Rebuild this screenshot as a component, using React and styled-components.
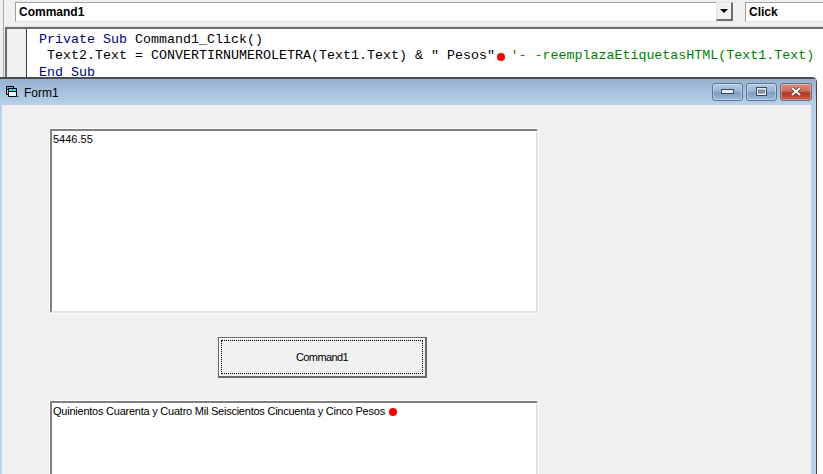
import React from "react";
import styled, { createGlobalStyle } from "styled-components";

const Global = createGlobalStyle`
  html, body { margin: 0; padding: 0; background: #fff; overflow: hidden; }
  #root { width: 823px; height: 474px; overflow: hidden; }
`;

const Page = styled.div`
  width: 823px;
  height: 474px;
  display: flex;
  flex-direction: column;
  overflow: hidden;
  background: #fff;
`;

const Ide = styled.div`
  height: 77px;
  flex: none;
  display: flex;
  background: #f0f0f0;
  padding-left: 3px;
`;

const IdeInner = styled.div`
  flex: 1;
  min-width: 0;
  display: flex;
  flex-direction: column;
  border-left: 1px solid #a9a9a9;
  padding-left: 1px;
`;

const ComboRow = styled.div`
  height: 27px;
  flex: none;
  display: flex;
  align-items: center;
  gap: 12px;
  padding-left: 10px;
  border-bottom: 1px solid #e3e3e3;
  box-sizing: border-box;
`;

const Combo = styled.div`
  height: 20px;
  width: ${(p) => p.$width}px;
  flex: none;
  box-sizing: border-box;
  margin-top: -3px;
  background: #fff;
  border: 1px solid #a0a0a0;
  border-bottom-color: #e3e3e3;
  border-right: none;
  display: flex;
  align-items: center;
  justify-content: space-between;
  padding-left: 3px;
  font: bold 12px/18px "Liberation Sans", Arial, sans-serif;
  color: #000;
`;

const ComboArrow = styled.div`
  width: 17px;
  height: 19px;
  background: #f0f0f0;
  border: 2px solid #6f6f6f;
  border-top: 1px solid #e3e3e3;
  border-left: 1px solid #e3e3e3;
  box-sizing: border-box;
  display: flex;
  align-items: center;
  justify-content: center;
`;

const Editor = styled.div`
  flex: 1;
  min-height: 0;
  display: flex;
  border-top: 2px solid #6d6d6d;
  border-left: 2px solid #6d6d6d;
  background: #fff;
`;

const Gutter = styled.div`
  width: 19px;
  flex: none;
  background: #f0f0f0;
  border-right: 1px solid #404040;
`;

const Code = styled.div`
  flex: 1;
  padding: 2.5px 0 0 12px;
  font: 13.33px/16.5px "Liberation Mono", "Courier New", monospace;
  color: #000;
  white-space: pre;
`;

const Keyword = styled.span`
  color: #00007f;
`;

const Comment = styled.span`
  color: #007f00;
`;

const RedDot = styled.span`
  display: inline-block;
  width: ${(p) => p.$size}px;
  height: ${(p) => p.$size}px;
  border-radius: 50%;
  background: #f60000;
  vertical-align: ${(p) => p.$drop}px;
  margin: 0 ${(p) => p.$after}px 0 ${(p) => p.$before}px;
`;

const Window = styled.div`
  flex: 1;
  min-height: 0;
  width: 817px;
  box-sizing: border-box;
  display: flex;
  flex-direction: column;
  border-top: 2px solid #4c4c4c;
  border-top-right-radius: 5px;
  border-right: 1px solid #3a4a5a;
  background: #b9d1ea;
`;

const TitleBar = styled.div`
  height: 26px;
  flex: none;
  display: flex;
  align-items: center;
  padding-left: 6px;
  gap: 5px;
  background: linear-gradient(#97b0cd, #b9d1ea);
  font: 12px/16px "Liberation Sans", Arial, sans-serif;
  color: #000;
`;

const TitleText = styled.span`
  flex: 1;
  padding-top: 1px;
`;

const Caption = styled.div`
  display: flex;
  gap: 3px;
  margin-right: 4px;
  margin-top: -1px;
`;

const CapButton = styled.div`
  width: ${(p) => p.$width}px;
  height: 18px;
  box-sizing: border-box;
  border: 1px solid #5d7390;
  border-radius: 3px;
  background: ${(p) =>
    p.$close
      ? "linear-gradient(#dc8b7e, #cf6a58 45%, #b43a28 55%, #c85a44)"
      : "linear-gradient(#b4cae2, #9ab4d2 45%, #7f9cbe 55%, #9ebcda)"};
  box-shadow: inset 0 0 0 1px rgba(255, 255, 255, 0.35);
  display: flex;
  align-items: center;
  justify-content: center;
`;

const Client = styled.div`
  flex: 1;
  margin-left: 2px;
  margin-right: 5px;
  background: #f0f0f0;
  display: flex;
  flex-direction: column;
  padding: 24px 0 0 48px;
  min-height: 0;
  overflow: hidden;
`;

const TextBox = styled.div`
  width: 488px;
  height: ${(p) => p.$height}px;
  flex: none;
  box-sizing: border-box;
  background: #fff;
  border: 2px solid;
  border-color: #808080 #e3e3e3 #e3e3e3 #808080;
  padding: 2px 0 0 1px;
  font: 11px/13px "Liberation Sans", Arial, sans-serif;
  letter-spacing: ${(p) => (p.$tight ? "-0.235px" : "0")};
  color: #000;
  white-space: pre;
  outline: 1px solid #fff;
`;

const CommandRow = styled.div`
  flex: none;
  height: 88px;
  padding-left: 168px;
  display: flex;
  align-items: center;
`;

const CommandButton = styled.div`
  width: 209px;
  height: 41px;
  box-sizing: border-box;
  background: #f0f0f0;
  border: 1px solid #696969;
  border-right-width: 2px;
  border-bottom-width: 2px;
  box-shadow: inset 1px 1px 0 #fff;
  padding: 2px;
  display: flex;
`;

const CommandFocus = styled.div`
  flex: 1;
  border: 1px dotted #000;
  display: flex;
  align-items: center;
  justify-content: center;
  padding-top: 1px;
  font: 11px/13px "Liberation Sans", Arial, sans-serif;
  letter-spacing: -0.6px;
  color: #000;
`;

const FormIcon = () => (
  <svg width="13" height="12" viewBox="0 0 13 12" fill="none">
    <path d="M.5 .5h7v3h-7z" fill="#35d6e6" stroke="#000" />
    <path d="M.5 3.500v5h2" stroke="#000" />
    <path d="M2.500 2.500h8v8h-8z" fill="#fff" stroke="#000" />
    <path d="M2.500 2.500h8v3h-8z" fill="#35d6e6" stroke="#000" />
    <rect x="11" y="10" width="2" height="1" fill="#6a6a6a" />
  </svg>
);

export default function App() {
  return (
    <Page>
      <Global />
      <Ide>
        <IdeInner>
          <ComboRow>
            <Combo $width={718}>
              Command1
              <ComboArrow>
                <svg width="8" height="4" viewBox="0 0 8 4">
                  <path d="M0 0h8L4 4z" fill="#000" />
                </svg>
              </ComboArrow>
            </Combo>
            <Combo $width={90}>Click</Combo>
          </ComboRow>
          <Editor>
            <Gutter />
            <Code>
              <Keyword>Private Sub</Keyword> Command1_Click(){"\n"}
              {" Text2.Text = CONVERTIRNUMEROLETRA(Text1.Text) & \" Pesos\""}
              <RedDot $size={8} $drop={-2} $before={2} $after={5.5} />
              <Comment>{"'- -reemplazaEtiquetasHTML(Text1.Text)"}</Comment>
              {"\n"}
              <Keyword>End Sub</Keyword>
            </Code>
          </Editor>
        </IdeInner>
      </Ide>
      <Window>
        <TitleBar>
          <FormIcon />
          <TitleText>Form1</TitleText>
          <Caption>
            <CapButton $width={31}>
              <svg width="13" height="5" viewBox="0 0 13 5">
                <rect x="0.5" y="0.5" width="12" height="4" fill="#e8eef5" stroke="#3c4c60" />
              </svg>
            </CapButton>
            <CapButton $width={31}>
              <svg width="11" height="9" viewBox="0 0 11 9">
                <rect x="0.5" y="0.5" width="10" height="8" fill="#e8eef5" stroke="#3c4c60" />
                <rect x="2.5" y="3" width="6" height="3" fill="#8aa4c2" stroke="#3c4c60" strokeWidth="0.6" />
              </svg>
            </CapButton>
            <CapButton $width={32} $close>
              <svg width="12" height="9" viewBox="0 0 12 9">
                <path d="M2 1l8 7M10 1L2 8" stroke="#5a2a20" strokeWidth="3.4" />
                <path d="M2 1l8 7M10 1L2 8" stroke="#fff" strokeWidth="2" />
              </svg>
            </CapButton>
          </Caption>
        </TitleBar>
        <Client>
          <TextBox $height={184}>5446.55</TextBox>
          <CommandRow>
            <CommandButton>
              <CommandFocus>Command1</CommandFocus>
            </CommandButton>
          </CommandRow>
          <TextBox $height={100} $tight>
            Quinientos Cuarenta y Cuatro Mil Seiscientos Cincuenta y Cinco Pesos
            <RedDot $size={8} $drop={-1} $before={4} $after={0} />
          </TextBox>
        </Client>
      </Window>
    </Page>
  );
}
